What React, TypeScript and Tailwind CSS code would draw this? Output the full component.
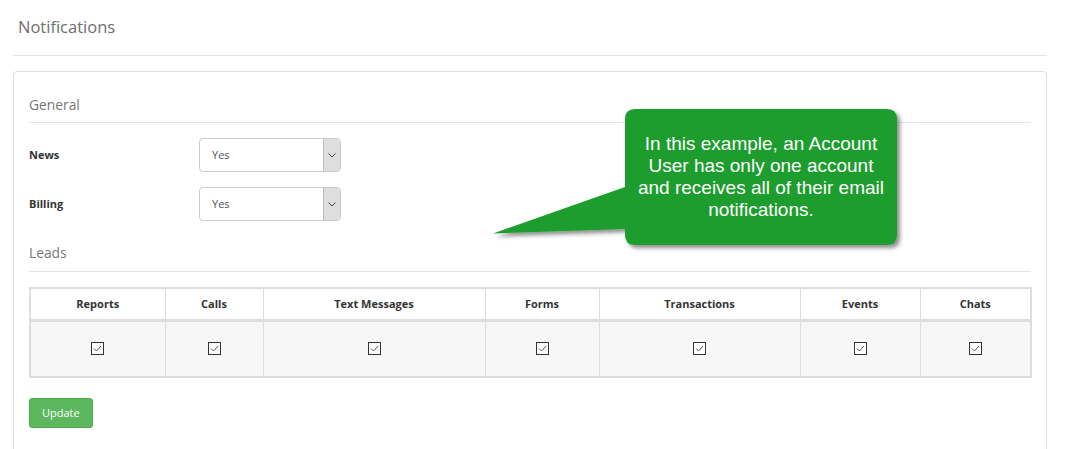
import React from "react";

const Check = () => (
  <svg width="13" height="13" viewBox="0 0 13 13" className="inline-block">
    <rect x="0.5" y="0.5" width="12" height="12" fill="#fff" stroke="#333" strokeWidth="1" />
    <path d="M3 6.5 L5.5 9 L10 4" fill="none" stroke="#555" strokeWidth="1" />
  </svg>
);

const Select = () => (
  <div className="flex w-[142px] h-[34px] border border-[#ccc] rounded-[4px] bg-white overflow-hidden">
    <div className="flex-1 flex items-center pl-[12px] text-[11px] text-[#555]">Yes</div>
    <div
      className="w-[17px] flex items-center justify-center border-l border-[#bbb] bg-[#dedede]"
      style={{ backgroundImage: "radial-gradient(#c8c8c8 0.5px, transparent 0.6px)", backgroundSize: "2px 2px" }}
    >
      <svg width="8" height="5" viewBox="0 0 8 5">
        <path d="M0.5 0.5 L4 4 L7.5 0.5" fill="none" stroke="#444" strokeWidth="1" />
      </svg>
    </div>
  </div>
);

const cols: [string, number][] = [
  ["Reports", 135],
  ["Calls", 98],
  ["Text Messages", 222],
  ["Forms", 114],
  ["Transactions", 201],
  ["Events", 120],
  ["Chats", 111],
];

export default function App() {
  return (
    <div className="relative w-[1066px] h-[449px] overflow-hidden bg-white" style={{ fontFamily: '"Open Sans", "DejaVu Sans", sans-serif' }}>
      <div className="pl-[13px] w-[1047px]">
        <div className="h-[56px] border-b border-[#e5e5e5] flex items-start pt-[15px] pl-[5px]">
          <span className="text-[16.5px] text-[#6e6e6e] leading-[24px]">Notifications</span>
        </div>
        <div className="mt-[15px] border border-[#dedede] rounded-[4px] h-[400px] px-[15px] pt-[23px]">
          <div className="text-[13.8px] text-[#777] leading-[20px] pb-[7px] border-b border-[#e5e5e5]">General</div>
          <div className="mt-[15px] flex items-center">
            <div className="w-[170px] text-[11px] font-bold text-[#333]">News</div>
            <Select />
          </div>
          <div className="mt-[15px] flex items-center">
            <div className="w-[170px] text-[11px] font-bold text-[#333]">Billing</div>
            <Select />
          </div>
          <div className="mt-[22px] text-[13.8px] text-[#777] leading-[20px] pb-[8px] border-b border-[#e5e5e5]">Leads</div>
          <table className="mt-[15px] w-[1003px] border-collapse border-2 border-[#ddd] table-fixed">
            <thead>
              <tr>
                {cols.map(([c, w]) => (
                  <th
                    key={c}
                    style={{ width: w }}
                    className="h-[32px] border border-[#ddd] border-b-[3px] text-[11px] font-bold text-[#333] text-center p-0"
                  >
                    {c}
                  </th>
                ))}
              </tr>
            </thead>
            <tbody>
              <tr className="bg-[#f7f7f7]">
                {cols.map(([c]) => (
                  <td key={c} className="h-[57px] border border-[#ddd] text-center p-0 align-middle">
                    <div className="flex justify-center">
                      <Check />
                    </div>
                  </td>
                ))}
              </tr>
            </tbody>
          </table>
          <button className="mt-[20px] h-[30px] px-[12px] rounded-[3px] bg-[#5cb85c] border border-[#4cae4c] text-white text-[11px]">
            Update
          </button>
        </div>
      </div>

      <svg className="absolute left-[490px] top-[105px]" width="420" height="150" viewBox="0 0 420 150">
        <defs>
          <filter id="sh" x="-10%" y="-10%" width="130%" height="130%">
            <feDropShadow dx="3" dy="3" stdDeviation="2" floodColor="#000" floodOpacity="0.45" />
          </filter>
        </defs>
        <path
          d="M145 4 H397 Q407 4 407 14 V130 Q407 140 397 140 H145 Q135 140 135 130 V124 L3 128.5 L135 82 V14 Q135 4 145 4 Z"
          fill="#1d9d2d"
          filter="url(#sh)"
        />
      </svg>
      <div
        className="absolute left-[625px] top-[109px] w-[272px] h-[136px] flex items-center justify-center text-center text-white text-[19px] leading-[22px]"
        style={{ fontFamily: '"Liberation Sans", Arial, sans-serif' }}
      >
        <div>
          In this example, an Account
          <br />
          User has only one account
          <br />
          and receives all of their email
          <br />
          notifications.
        </div>
      </div>
    </div>
  );
}
